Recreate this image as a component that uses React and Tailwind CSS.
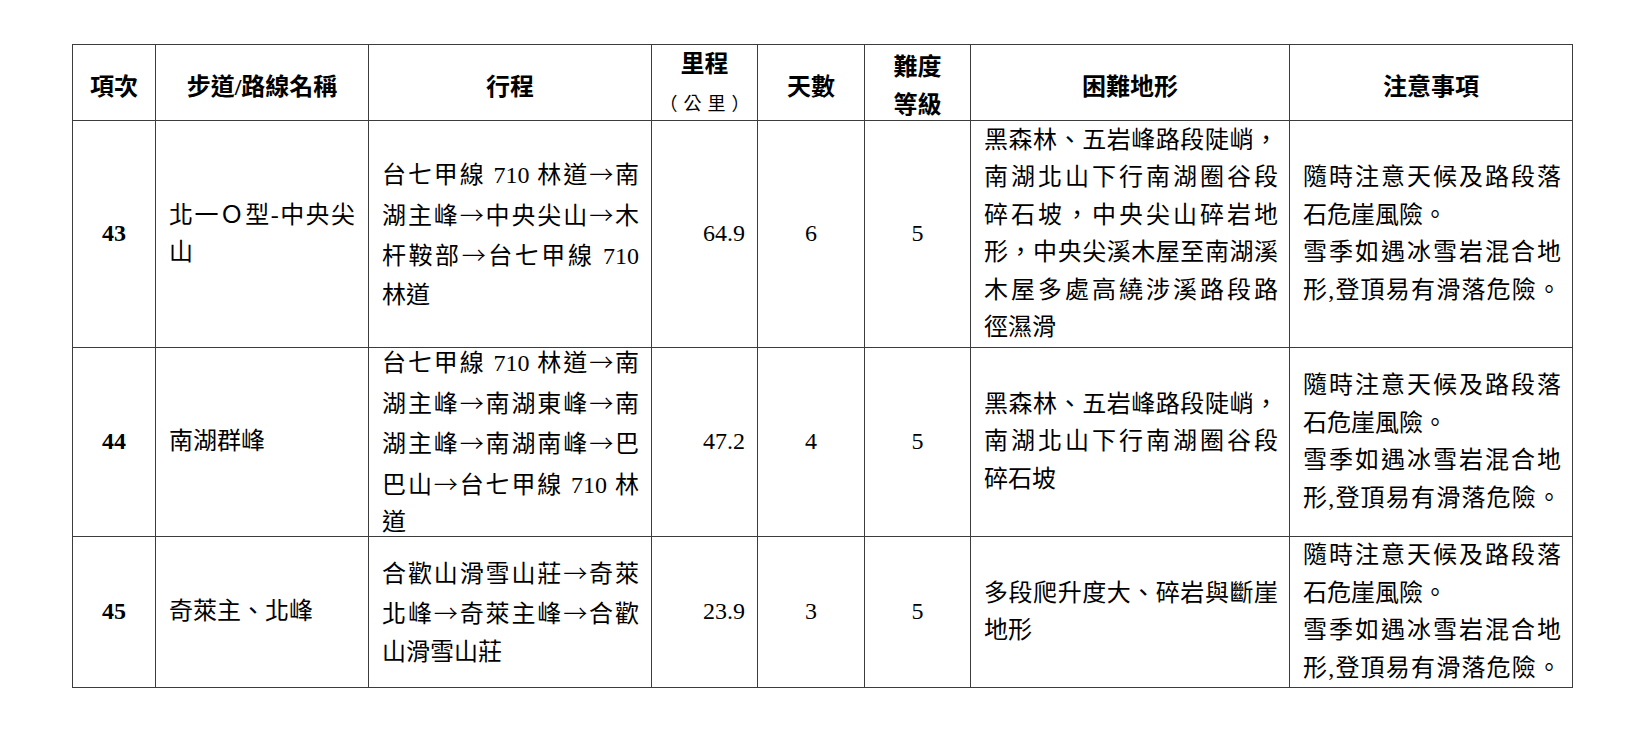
import React from "react";

function withArrows(text) {
  const parts = text.split("→");
  const out = [];
  parts.forEach((p, i) => {
    if (i > 0) {
      out.push(
        <span key={"a" + i} className="font-['Noto_Sans_CJK_TC',sans-serif] font-light">
          →
        </span>
      );
    }
    out.push(<React.Fragment key={"t" + i}>{p}</React.Fragment>);
  });
  return out;
}

function J({ children }) {
  return (
    <div className="text-justify [text-align-last:justify]">
      {typeof children === "string" ? withArrows(children) : children}
    </div>
  );
}
function N({ children }) {
  return <div className="text-left">{typeof children === "string" ? withArrows(children) : children}</div>;
}

const B = "border-r border-b border-[#3c3c3c] flex flex-col justify-center";

function Caution() {
  return (
    <div className={B + " pl-[13px] pr-[11px]"}>
      <J>隨時注意天候及路段落</J>
      <N>石危崖風險。</N>
      <J>雪季如遇冰雪岩混合地</J>
      <J>形,登頂易有滑落危險。</J>
    </div>
  );
}

export default function App() {
  return (
    <div className="min-h-[730px] w-[1627px] bg-white pt-[44px] pl-[72px] text-black text-[24px] leading-[37.5px] font-['Liberation_Serif','Noto_Sans_CJK_TC',serif]">
      <div className="grid w-[1501px] grid-cols-[83px_213px_283px_106px_107px_106px_319px_283px] grid-rows-[76px_227px_189px_151px] border-l border-t border-[#3c3c3c]">
        {/* header */}
        <div className={B + " items-center pt-[11px] font-bold"}>項次</div>
        <div className={B + " items-center pt-[11px] font-bold"}>步道/路線名稱</div>
        <div className={B + " items-center pt-[11px] font-bold"}>行程</div>
        <div className={B + " items-center leading-[38px]"}>
          <div className="font-bold">里程</div>
          <div className="text-[18px] tracking-[6px] pl-[6px] font-['Noto_Sans_CJK_TC',sans-serif]">（公里）</div>
        </div>
        <div className={B + " items-center pt-[11px] font-bold"}>天數</div>
        <div className={B + " items-center pt-[6px] font-bold leading-[38px]"}>
          <div>難度</div>
          <div>等級</div>
        </div>
        <div className={B + " items-center pt-[11px] font-bold"}>困難地形</div>
        <div className={B + " items-center pt-[11px] font-bold"}>注意事項</div>

        {/* row 43 */}
        <div className={B + " items-center font-bold"}>43</div>
        <div className={B + " pl-[13px] pr-[13px]"}>
          <J>北一Ｏ型-中央尖</J>
          <N>山</N>
        </div>
        <div className={B + " pl-[13px] pr-[12px] leading-[38.5px]"}>
          <J>台七甲線 710 林道→南</J>
          <J>湖主峰→中央尖山→木</J>
          <J>杆鞍部→台七甲線 710</J>
          <N>林道</N>
        </div>
        <div className={B + " items-end pr-[12px]"}>64.9</div>
        <div className={B + " items-center"}>6</div>
        <div className={B + " items-center"}>5</div>
        <div className={B + " pl-[13px] pr-[11px]"}>
          <J>黑森林、五岩峰路段陡峭，</J>
          <J>南湖北山下行南湖圈谷段</J>
          <J>碎石坡，中央尖山碎岩地</J>
          <J>形，中央尖溪木屋至南湖溪</J>
          <J>木屋多處高繞涉溪路段路</J>
          <N>徑濕滑</N>
        </div>
        <Caution />

        {/* row 44 */}
        <div className={B + " items-center font-bold"}>44</div>
        <div className={B + " pl-[13px] pr-[13px]"}>
          <N>南湖群峰</N>
        </div>
        <div className={B + " pl-[13px] pr-[12px]"}>
          <J>台七甲線 710 林道→南</J>
          <J>湖主峰→南湖東峰→南</J>
          <J>湖主峰→南湖南峰→巴</J>
          <J>巴山→台七甲線 710 林</J>
          <N>道</N>
        </div>
        <div className={B + " items-end pr-[12px]"}>47.2</div>
        <div className={B + " items-center"}>4</div>
        <div className={B + " items-center"}>5</div>
        <div className={B + " pl-[13px] pr-[11px]"}>
          <J>黑森林、五岩峰路段陡峭，</J>
          <J>南湖北山下行南湖圈谷段</J>
          <N>碎石坡</N>
        </div>
        <Caution />

        {/* row 45 */}
        <div className={B + " items-center font-bold"}>45</div>
        <div className={B + " pl-[13px] pr-[13px]"}>
          <N>奇萊主、北峰</N>
        </div>
        <div className={B + " pl-[13px] pr-[12px]"}>
          <J>合歡山滑雪山莊→奇萊</J>
          <J>北峰→奇萊主峰→合歡</J>
          <N>山滑雪山莊</N>
        </div>
        <div className={B + " items-end pr-[12px]"}>23.9</div>
        <div className={B + " items-center"}>3</div>
        <div className={B + " items-center"}>5</div>
        <div className={B + " pl-[13px] pr-[11px]"}>
          <J>多段爬升度大、碎岩與斷崖</J>
          <N>地形</N>
        </div>
        <Caution />
      </div>
    </div>
  );
}
